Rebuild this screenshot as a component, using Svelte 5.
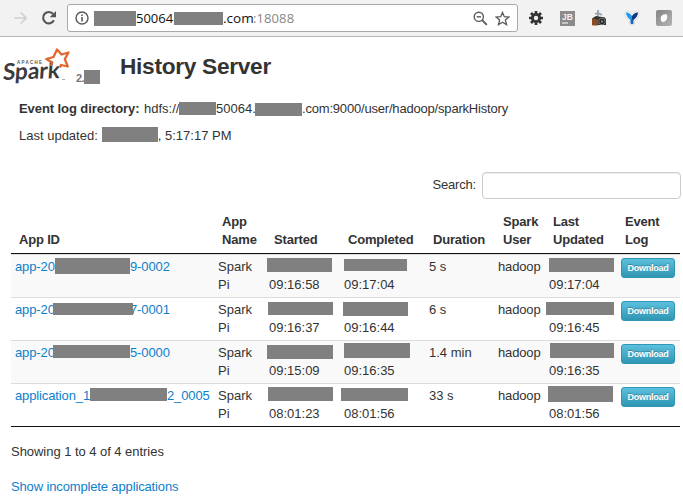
<script>
  const rows = [
    {
      id: ['app-20', '9-0002', 119], idBar: [55, 0, 75, 16], dur: '5 s',
      started: ['09:16:58', 2, 0, 65, 14], completed: ['09:17:04', 4, 1, 63, 12], updated: ['09:17:04', 4, 0, 65, 14]
    },
    {
      id: ['app-20', '7-0001', 119], idBar: [53, 2, 80, 12], dur: '6 s',
      started: ['09:16:37', 3, 1, 65, 13], completed: ['09:16:44', 3, 1, 65, 14], updated: ['09:16:45', 1, 1, 68, 13]
    },
    {
      id: ['app-20', '5-0000', 119], idBar: [53, 1, 77, 13], dur: '1.4 min',
      started: ['09:15:09', 2, 1, 66, 14], completed: ['09:16:35', 4, -1, 66, 15], updated: ['09:16:35', 5, -1, 64, 15]
    },
    {
      id: ['application_1', '2_0005', 156], idBar: [90, 1, 77, 13], dur: '33 s',
      started: ['08:01:23', 3, 0, 65, 14], completed: ['08:01:56', 1, 1, 67, 13], updated: ['08:01:56', 3, -1, 65, 16]
    }
  ];
  const heads = ['App ID', 'App Name', 'Started', 'Completed', 'Duration', 'Spark User', 'Last Updated', 'Event Log'];
</script>

{#snippet stamp(v)}
  <div class="stamp">
    <i class="bar" style="left:{v[1]}px;top:{v[2]}px;width:{v[3]}px;height:{v[4]}px"></i>
    <span>{v[0]}</span>
  </div>
{/snippet}

<div class="page">
  <div class="chrome">
    <svg class="fwd" width="16" height="16" viewBox="0 0 16 16"><path d="M1 8h12M7.700 2.500 13.200 8l-5.500 5.500" fill="none" stroke="#cfcfcf" stroke-width="1.700" /></svg>
    <svg class="reload" width="16" height="16" viewBox="0 0 16 16"><path d="M12.900 10.300A5.700 5.700 0 1 1 12.200 4" fill="none" stroke="#555" stroke-width="2.100" /><path d="M15 1v6.300H8.700z" fill="#555" /></svg>
    <div class="omni">
      <svg class="info" width="14" height="14" viewBox="0 0 14 14"><circle cx="7" cy="7" r="6" fill="none" stroke="#5a5a5a" stroke-width="1.400" /><path d="M7 6v4.400M7 3.400v1.600" stroke="#5a5a5a" stroke-width="1.600" /></svg>
      <i class="blk host"></i><span class="u1">50064</span><i class="blk domain"></i><span class="u2">.com</span><span class="port">:18088</span>
      <svg class="mag" width="15" height="15" viewBox="0 0 15 15"><g fill="none" stroke="#5a5a5a" stroke-width="1.400"><circle cx="5.800" cy="5.800" r="4.600" /><path d="M3.700 5.800H8" /><path d="m9.200 9.200 4.600 4.600" stroke-width="1.900" /></g></svg>
      <svg class="fav" width="15" height="15" viewBox="0 0 15 15"><path d="m7.500 1.400 1.800 4.300 4.600.4-3.500 3 1.100 4.500-4-2.400-4 2.400 1.100-4.500-3.500-3 4.600-.4z" fill="none" stroke="#5a5a5a" stroke-width="1.300" /></svg>
    </div>
    <div class="exts">
      <svg width="16" height="16" viewBox="0 0 16 16"><g stroke="#333" stroke-width="2.700"><path d="M8 1v14M1 8h14M3 3l10 10M13 3 3 13" /></g><circle cx="8" cy="8" r="5" fill="#333" /><circle cx="8" cy="8" r="2.200" fill="#f2f2f2" /></svg>
      <svg width="15" height="15" viewBox="0 0 15 15"><rect width="15" height="15" fill="#8b8b8b" /><text x="2" y="8.600" font-size="8.500" font-weight="bold" fill="#f4f4f4" textLength="11">JB</text><path d="M2 12h6" stroke="#eee" stroke-width="1.200" /></svg>
      <svg width="16" height="17" viewBox="0 0 16 17"><path d="M7 0v6M4 4l3-1 4 2" stroke="#9aa3aa" stroke-width="1.800" fill="none" /><path d="M1 8.500 7 6v9.500H2q-1 0-1-1z" fill="#8a4c22" /><path d="M1 8.500 5 6l9 1.500 1 2v5.500H7V9.500z" fill="#343434" /><circle cx="11" cy="11.500" r="3.200" fill="#222" stroke="#777" /><circle cx="11" cy="11.500" r="1.200" fill="#79818a" /></svg>
      <svg width="16" height="16" viewBox="0 0 16 16"><path d="M1 2Q4-.5 8 4q4-4.500 7-2 1.500 3-3 7.500L10.500 11v3q-2.500 2.500-5 0v-3L4 9.500Q-.5 5 1 2z" fill="#fff" stroke="#dcdcdc" /><path d="M2 2.500Q5.500 2 8 6v5.500L6.500 10Q2 6.500 2 2.500z" fill="#1f9ae8" /><path d="M14 2.500Q10.500 2 8 6v5.500L9.500 10Q14 6.500 14 2.500z" fill="#123a80" /><path d="M6.500 9.500h3v4q-1.500 1.300-3 0z" fill="#1767b8" /></svg>
      <svg width="16" height="16" viewBox="0 0 16 16"><defs><linearGradient id="g" x2="1" y2="1"><stop stop-color="#848484" /><stop offset="1" stop-color="#b4b4b4" /></linearGradient></defs><rect width="16" height="16" rx="2" fill="url(#g)" /><path d="M5 6.500Q7 3.500 11 4.500q.8 4.500-1.500 6.500-2 1.600-4 .5Q4 9 5 6.500z" fill="#fff" /></svg>
    </div>
  </div>

  <header>
    <svg class="logo" width="70" height="40" viewBox="0 0 70 40">
      <text x="17" y="17.500" font-size="4.500" font-weight="bold" fill="#555" textLength="25">APACHE</text>
      <text class="word" x="2" y="33" font-size="23" textLength="57" lengthAdjust="spacingAndGlyphs" transform="rotate(-2 30 32) translate(3.800 0) skewX(-6)">Spark</text>
      <path d="M51 20l1.200-3.500L46.300 13l7.200-2L57 3.500l4.500 5L68.500 6.500 64.800 13l3 7.500-6.800-1.500-1 2.500" fill="none" stroke="#e2672c" stroke-width="2.300" stroke-linejoin="round" />
      <path d="M62 33.500h3" stroke="#aaa" />
    </svg>
    <span class="ver">2.<i class="blk"></i></span>
    <h1>History Server</h1>
  </header>

  <div class="meta"><b>Event log directory:</b><span class="m1">hdfs://</span><i class="blk b1"></i><span class="m2">50064.</span><i class="blk b2"></i><span class="m3">.com:9000/user/hadoop/sparkHistory</span></div>
  <div class="meta second"><span>Last updated:</span><i class="blk b3"></i><span>, 5:17:17 PM</span></div>

  <div class="search"><label for="q">Search:</label><input id="q" type="text" /></div>

  <table>
    <colgroup><col style="width:203px" /><col style="width:51px" /><col style="width:75px" /><col style="width:85px" /><col style="width:69px" /><col style="width:51px" /><col style="width:72px" /><col style="width:63px" /></colgroup>
    <thead><tr>{#each heads as h}<th>{h}</th>{/each}</tr></thead>
    <tbody>
      {#each rows as r, i}
        <tr class:odd={i % 2 === 0}>
          <td><a class="app" href="#app"><span style="width:{r.id[2] - 4}px">{r.id[0]}</span><span>{r.id[1]}</span><i class="bar" style="left:{r.idBar[0] - 15}px;top:{r.idBar[1]}px;width:{r.idBar[2]}px;height:{r.idBar[3]}px"></i></a></td>
          <td>Spark Pi</td>
          <td class="dt">{@render stamp(r.started)}</td>
          <td class="dt">{@render stamp(r.completed)}</td>
          <td>{r.dur}</td>
          <td class="user">hadoop</td>
          <td class="dt">{@render stamp(r.updated)}</td>
          <td><a class="btn" href="#log">Download</a></td>
        </tr>
      {/each}
    </tbody>
  </table>

  <p class="count">Showing 1 to 4 of 4 entries</p>
  <a class="more" href="#all">Show incomplete applications</a>
</div>

<style>
  :global(body) { background: #fff; }
  .page { width: 683px; height: 502px; overflow: hidden; background: #fff; color: #333; font: 13px/18px "Liberation Sans", Arial, sans-serif; }
  .page * { box-sizing: border-box; }
  a { color: #0b80cc; text-decoration: none; }
  .blk { display: block; flex: none; background: #808080; }
  svg { display: block; flex: none; }

  .chrome { display: flex; height: 37px; align-items: center; background: #f2f2f2; border-bottom: 1px solid #b5b5b5; padding-left: 13px; }
  .reload { margin-left: 12px; }
  .omni { display: flex; align-items: center; width: 451px; height: 28px; margin-left: 10px; padding-left: 7px; background: #fff; border: 1px solid #a9a9a9; border-radius: 3px; font: 13px/18px "Open Sans", sans-serif; color: #111; }
  .host { width: 42px; height: 15px; margin-left: 5px; }
  .u1 { width: 38px; }
  .domain { width: 49px; height: 13px; }
  .u2 { width: 30px; font-size: 13.500px; }
  .port { color: #888; letter-spacing: .1px; }
  .mag { margin-left: auto; }
  .fav { margin: 0 7px 0 7px; }
  .exts { display: flex; align-items: center; gap: 16.200px; margin-left: 10px; }

  header { display: flex; height: 62px; }
  .logo { margin-top: 9px; font-family: "Liberation Sans", Arial, sans-serif; }
  .word { font-family: Lato, sans-serif; font-weight: bold; fill: #3c3a3e; }
  .ver { display: flex; align-items: center; width: 50px; height: 18px; margin: 32px 0 0 6px; font-size: 11px; font-weight: bold; letter-spacing: -.5px; color: #777; }
  .ver .blk { width: 16px; height: 14px; margin-top: -2px; }
  h1 { margin: 13px 0 0 -6px; font-size: 22.700px; line-height: 32px; font-weight: bold; letter-spacing: -.300px; }

  .meta { display: flex; align-items: center; height: 18px; padding-left: 19px; margin-top: 1px; white-space: nowrap; }
  .meta b { width: 125px; letter-spacing: -.080px; }
  .m1 { width: 35px; }
  .m2 { width: 39px; }
  .m3 { letter-spacing: -.190px; }
  .meta.second { margin-top: 9px; }
  .b1 { width: 37px; height: 13px; margin-top: -2px; }
  .b2 { width: 47px; height: 13px; }
  .b3 { width: 56px; height: 15px; margin-left: 4px; margin-top: -3px; }

  .search { display: flex; justify-content: flex-end; margin: 27px 2px 0 0; }
  label { margin: 4px 6px 0 0; letter-spacing: -.200px; }
  input { width: 199px; height: 27px; border: 1px solid #ccc; border-radius: 4px; box-shadow: inset 0 1px 1px rgba(0,0,0,.075); background: #fff; }

  table { width: 669px; margin: 13px 0 0 11px; table-layout: fixed; border-spacing: 0; border-bottom: 1px solid #111; }
  th { height: 42px; padding: 0 4px 4px 8px; vertical-align: bottom; text-align: left; border-bottom: 1px solid #111; letter-spacing: -.180px; }
  th:nth-child(2) { padding-right: 8px; }
  th:nth-child(3), th:nth-child(6) { padding-left: 9px; }
  td { height: 43px; padding: 3px 4px; border-top: 1px solid #ddd; vertical-align: top; }
  .odd td { background: #f9f9f9; }
  td.dt { padding-left: 0; padding-right: 0; }
  .user { letter-spacing: -.150px; }
  .bar { position: absolute; background: #808080; }
  .app { display: flex; position: relative; white-space: nowrap; height: 18px; letter-spacing: -.120px; }
  .app span { flex: none; }
  .stamp { position: relative; padding: 18px 0 0 4px; }
  .btn { display: block; width: 54px; height: 20px; border: 1px solid #2f96b4; border-radius: 3px; background: linear-gradient(#5bc0de, #2f96b4); color: #fff; font: bold 9px/19px "Liberation Sans", sans-serif; letter-spacing: -.250px; text-align: center; text-shadow: 0 -1px 0 rgba(0,0,0,.25); }

  .count { margin: 16px 0 17px 11px; letter-spacing: -.040px; }
  .more { margin-left: 11px; letter-spacing: -.140px; }
</style>
